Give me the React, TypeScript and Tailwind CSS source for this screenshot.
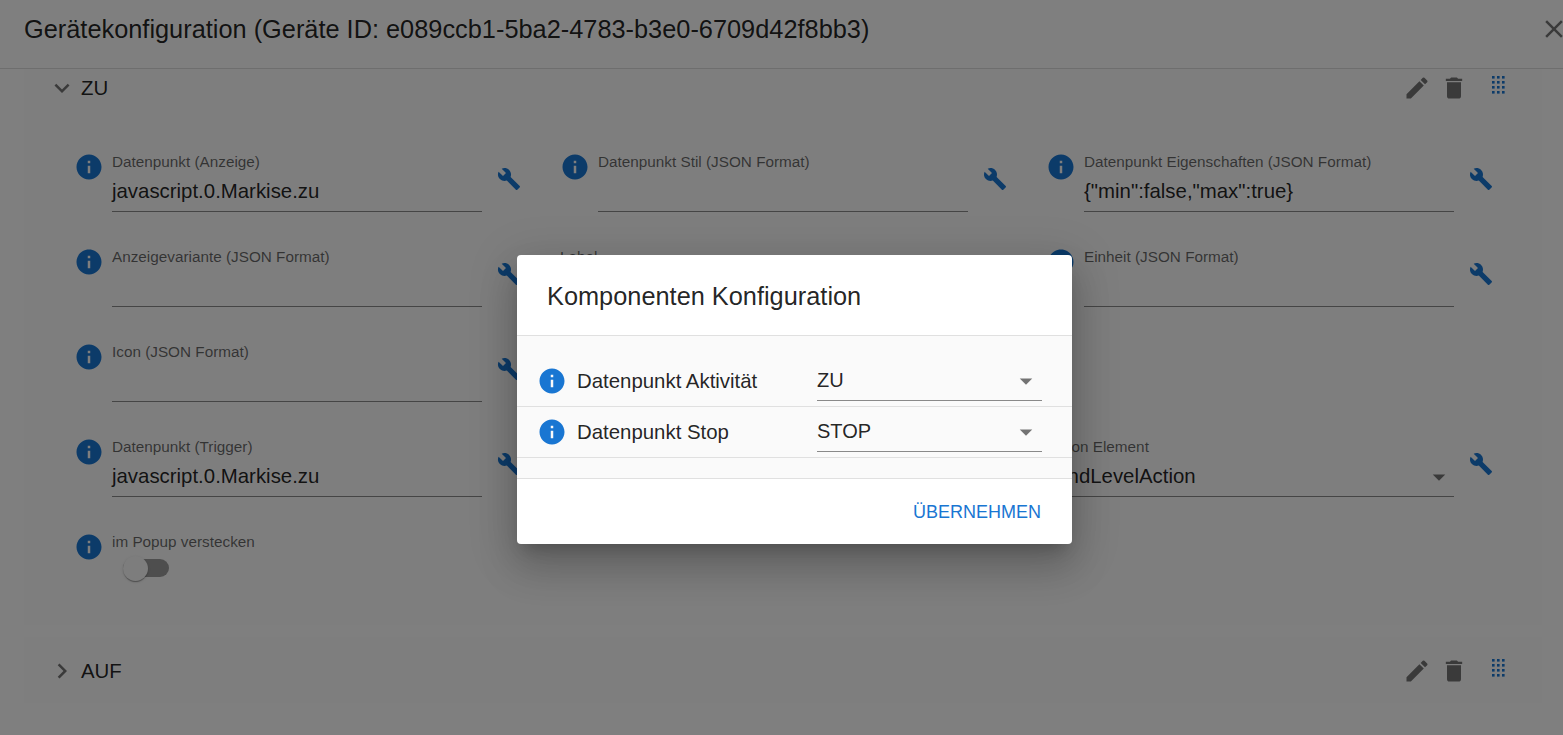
const mdi = {
  info: 'M12 2C6.48 2 2 6.48 2 12s4.48 10 10 10 10-4.48 10-10S17.52 2 12 2zm1 15h-2v-6h2v6zm0-8h-2V7h2v2z',
  build: 'M22.7 19l-9.1-9.1c.9-2.3.4-5-1.5-6.9-2-2-5-2.4-7.4-1.3L9 6 6 9 1.6 4.7C.4 7.1.9 10.1 2.9 12.1c1.9 1.9 4.6 2.4 6.9 1.5l9.1 9.1c.4.4 1 .4 1.4 0l2.3-2.3c.5-.4.5-1.1.1-1.4z',
  edit: 'M3 17.25V21h3.75L17.81 9.94l-3.75-3.75L3 17.25zM20.71 7.04c.39-.39.39-1.02 0-1.41l-2.34-2.34a.9959.9959 0 0 0-1.41 0l-1.83 1.83 3.75 3.75 1.83-1.83z',
  trash: 'M6 19c0 1.1.9 2 2 2h8c1.1 0 2-.9 2-2V7H6v12zM19 4h-3.5l-1-1h-5l-1 1H5v2h14V4z',
  more: 'M16.59 8.59 12 13.17 7.41 8.59 6 10l6 6 6-6z',
  right: 'M10 6 8.59 7.41 13.17 12l-4.58 4.59L10 18l6-6z',
  close: 'M19 6.41 17.59 5 12 10.59 6.41 5 5 6.41 10.59 12 5 17.59 6.41 19 12 13.41 17.59 19 19 17.59 13.41 12z',
  arrow: 'M7 10l5 5 5-5z',
}

function Icon({ d, className }: { d: string; className: string }) {
  return (
    <svg viewBox="0 0 24 24" fill="currentColor" className={className}>
      <path d={d} />
    </svg>
  )
}

function DragDots() {
  const dots = []
  for (let r = 0; r < 4; r++) {
    for (let c = 0; c < 3; c++) {
      dots.push(<rect key={`${r}-${c}`} x={c * 5} y={r * 5} width="2.6" height="2.6" />)
    }
  }
  return (
    <svg width="13" height="18" viewBox="0 0 13 18" fill="#1976d2" className="shrink-0">
      {dots}
    </svg>
  )
}

interface FieldProps {
  label: string
  value?: string
  noInfo?: boolean
  select?: boolean
}

function Field({ label, value, noInfo, select }: FieldProps) {
  return (
    <div className="flex h-[95px] items-start pt-[10px]">
      {!noInfo && (
        <Icon d={mdi.info} className="h-[30px] w-[30px] shrink-0 text-[#1976d2]" />
      )}
      <div className={noInfo ? 'w-[408px]' : 'ml-2 w-[370px]'}>
        <div className="h-[20px] text-[15.3px] leading-[20px] text-black/60">{label}</div>
        <div className="relative mt-[5px] h-[35px] border-b border-black/45 text-[20.4px] leading-[28px] text-black/87">
          {value}
          {select && (
            <Icon d={mdi.arrow} className="absolute right-0 top-0 h-[30px] w-[30px] text-black/54" />
          )}
        </div>
      </div>
      <Icon d={mdi.build} className="ml-[15px] mt-[15px] h-6 w-6 shrink-0 text-[#1976d2]" />
    </div>
  )
}

function AccordionHead({ title, open }: { title: string; open?: boolean }) {
  return (
    <div className="flex items-center">
      <Icon d={open ? mdi.more : mdi.right} className="ml-[23px] h-[30px] w-[30px] shrink-0 text-black/54" />
      <span className="ml-[4px] flex-1 text-[20.4px] text-black/87">{title}</span>
      <Icon d={mdi.edit} className="h-[28px] w-[28px] shrink-0 text-black/54" />
      <Icon d={mdi.trash} className="ml-[9px] h-[28px] w-[28px] shrink-0 text-black/54" />
      <div className="mb-[7px] ml-[24px] mr-[37px]">
        <DragDots />
      </div>
    </div>
  )
}

function SelectRow({ label, value }: { label: string; value: string }) {
  return (
    <div className="flex h-[51px] items-center border-b border-[#e0e0e0]">
      <Icon d={mdi.info} className="ml-[20px] h-[30px] w-[30px] shrink-0 text-[#1976d2]" />
      <span className="ml-[10px] w-[240px] text-[20.4px] text-black/87">{label}</span>
      <div className="relative mt-[2px] h-[38px] w-[225px] border-b border-black/45 text-[20px] leading-[34px] text-black/87">
        {value}
        <Icon d={mdi.arrow} className="absolute right-px top-[3px] h-[30px] w-[30px] text-black/54" />
      </div>
    </div>
  )
}

export default function App() {
  return (
    <div className="relative h-[735px] w-[1563px] overflow-hidden bg-white font-['Liberation_Sans',Arial,sans-serif]">
      <header className="flex h-[69px] items-center border-b border-[#dcdcdc] pb-[10px] pl-[24px]">
        <h1 className="flex-1 text-[25.35px] font-normal text-black/87">
          Gerätekonfiguration (Geräte ID: e089ccb1-5ba2-4783-b3e0-6709d42f8bb3)
        </h1>
        <Icon d={mdi.close} className="mr-[-6px] h-[30px] w-[30px] shrink-0 text-black/54" />
      </header>

      <main className="pl-[24px] pr-[21px]">
        <section className="h-[556px] bg-[#fcfcfc] pt-[4px]">
          <AccordionHead title="ZU" open />
          <div className="mt-[38px] grid grid-cols-[486px_486px_486px] pl-[50px]">
            <Field label="Datenpunkt (Anzeige)" value="javascript.0.Markise.zu" />
            <Field label="Datenpunkt Stil (JSON Format)" />
            <Field label="Datenpunkt Eigenschaften (JSON Format)" value={'{"min":false,"max":true}'} />

            <Field label="Anzeigevariante (JSON Format)" />
            <Field label="Label" noInfo />
            <Field label="Einheit (JSON Format)" />

            <Field label="Icon (JSON Format)" />
            <div />
            <div />

            <Field label="Datenpunkt (Trigger)" value="javascript.0.Markise.zu" />
            <div />
            <Field label="Aktion Element" value="sendLevelAction" noInfo select />

            <div className="flex h-[95px] items-start pt-[10px]">
              <Icon d={mdi.info} className="h-[30px] w-[30px] shrink-0 text-[#1976d2]" />
              <div className="ml-2">
                <div className="h-[20px] text-[15.3px] leading-[20px] text-black/60">im Popup verstecken</div>
                <div className="relative ml-[11px] mt-[7px] h-[18px] w-[46px] rounded-full bg-black/38">
                  <span className="absolute -top-[3px] left-0 h-[25px] w-[25px] rounded-full bg-[#fafafa] shadow-[0_2px_1px_-1px_rgba(0,0,0,0.2),0_1px_1px_rgba(0,0,0,0.14),0_1px_3px_rgba(0,0,0,0.12)]" />
                </div>
              </div>
            </div>
          </div>
        </section>
        <section className="mt-[12px] flex h-[66px] flex-col justify-center bg-[#fcfcfc] pt-[3px]">
          <AccordionHead title="AUF" />
        </section>
      </main>

      {/* backdrop + nested dialog */}
      <div className="absolute inset-0 bg-black/50" />
      <div className="absolute left-[517px] top-[255px] flex h-[289px] w-[555px] flex-col rounded bg-white shadow-[0_11px_15px_-7px_rgba(0,0,0,0.2),0_24px_38px_3px_rgba(0,0,0,0.14),0_9px_46px_8px_rgba(0,0,0,0.12)]">
        <h2 className="flex h-[81px] items-center border-b border-[#e0e0e0] pl-[30px] pt-[2px] text-[25.35px] font-normal text-black/87">
          Komponenten Konfiguration
        </h2>
        <div className="h-[143px] border-b border-[#e0e0e0] bg-[#fafafa] pt-[20px]">
          <SelectRow label="Datenpunkt Aktivität" value="ZU" />
          <SelectRow label="Datenpunkt Stop" value="STOP" />
        </div>
        <div className="flex flex-1 items-center justify-end pr-[31px] pt-[1px]">
          <span className="text-[18px] uppercase text-[#1976d2]">Übernehmen</span>
        </div>
      </div>
    </div>
  )
}
